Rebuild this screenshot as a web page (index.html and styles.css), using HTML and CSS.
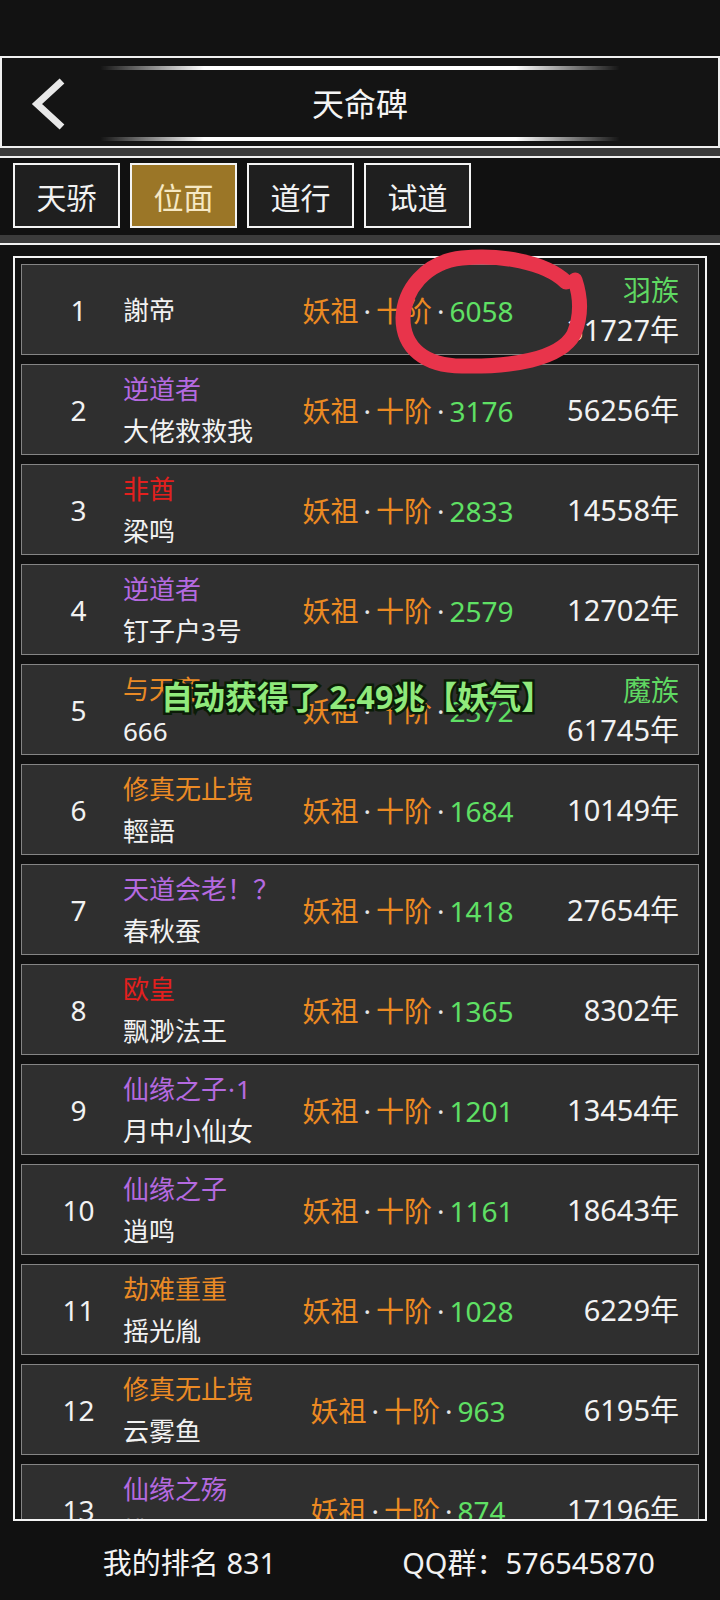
FILE: index.html
```html
<!DOCTYPE html>
<html lang="zh-CN">

<head>
    <meta charset="UTF-8">
    <meta name="viewport" content="width=device-width, initial-scale=1.0">
    <title>天命碑</title>
    <link rel="stylesheet" href="styles.css">
</head>

<body>
    <div class="screen">
        <div class="statusbar"></div>

        <header class="topbar">
            <div class="deco"></div>
            <div class="topbar-row">
                <svg class="back" width="40" height="52" viewBox="0 0 40 52">
                    <polyline points="33,3 8,26 33,49" fill="none" stroke="#e8e8e8" stroke-width="7" />
                </svg>
                <h1 class="title">天命碑</h1>
                <div></div>
            </div>
            <div class="deco"></div>
        </header>

        <div class="band"></div>

        <nav class="tabs">
            <div class="tab">天骄</div>
            <div class="tab active">位面</div>
            <div class="tab">道行</div>
            <div class="tab">试道</div>
        </nav>

        <div class="band"></div>

        <div class="board">
            <div class="list">
                <div class="row">
                    <div class="rank">1</div>
                    <div class="who"><div class="name">謝帝</div></div>
                    <div class="realm"><span class="o">妖祖</span><span class="dot">·</span><span class="o">十阶</span><span class="dot">·</span><span class="g">6058</span></div>
                    <div class="age"><div class="race">羽族</div><div>31727年</div></div>
                </div>
                <div class="row">
                    <div class="rank">2</div>
                    <div class="who"><div class="tag purple">逆道者</div><div class="name">大佬救救我</div></div>
                    <div class="realm"><span class="o">妖祖</span><span class="dot">·</span><span class="o">十阶</span><span class="dot">·</span><span class="g">3176</span></div>
                    <div class="age">56256年</div>
                </div>
                <div class="row">
                    <div class="rank">3</div>
                    <div class="who"><div class="tag red">非酋</div><div class="name">梁鸣</div></div>
                    <div class="realm"><span class="o">妖祖</span><span class="dot">·</span><span class="o">十阶</span><span class="dot">·</span><span class="g">2833</span></div>
                    <div class="age">14558年</div>
                </div>
                <div class="row">
                    <div class="rank">4</div>
                    <div class="who"><div class="tag purple">逆道者</div><div class="name">钉子户3号</div></div>
                    <div class="realm"><span class="o">妖祖</span><span class="dot">·</span><span class="o">十阶</span><span class="dot">·</span><span class="g">2579</span></div>
                    <div class="age">12702年</div>
                </div>
                <div class="row">
                    <div class="rank">5</div>
                    <div class="who"><div class="tag orange">与天齐</div><div class="name">666</div></div>
                    <div class="realm"><span class="o">妖祖</span><span class="dot">·</span><span class="o">十阶</span><span class="dot">·</span><span class="g">2372</span></div>
                    <div class="age"><div class="race">魔族</div><div>61745年</div></div>
                </div>
                <div class="row">
                    <div class="rank">6</div>
                    <div class="who"><div class="tag orange">修真无止境</div><div class="name">輕語</div></div>
                    <div class="realm"><span class="o">妖祖</span><span class="dot">·</span><span class="o">十阶</span><span class="dot">·</span><span class="g">1684</span></div>
                    <div class="age">10149年</div>
                </div>
                <div class="row">
                    <div class="rank">7</div>
                    <div class="who"><div class="tag purple">天道会老！？</div><div class="name">春秋蚕</div></div>
                    <div class="realm"><span class="o">妖祖</span><span class="dot">·</span><span class="o">十阶</span><span class="dot">·</span><span class="g">1418</span></div>
                    <div class="age">27654年</div>
                </div>
                <div class="row">
                    <div class="rank">8</div>
                    <div class="who"><div class="tag red">欧皇</div><div class="name">飘渺法王</div></div>
                    <div class="realm"><span class="o">妖祖</span><span class="dot">·</span><span class="o">十阶</span><span class="dot">·</span><span class="g">1365</span></div>
                    <div class="age">8302年</div>
                </div>
                <div class="row">
                    <div class="rank">9</div>
                    <div class="who"><div class="tag purple">仙缘之子<span class="dot small">·</span>1</div><div class="name">月中小仙女</div></div>
                    <div class="realm"><span class="o">妖祖</span><span class="dot">·</span><span class="o">十阶</span><span class="dot">·</span><span class="g">1201</span></div>
                    <div class="age">13454年</div>
                </div>
                <div class="row">
                    <div class="rank">10</div>
                    <div class="who"><div class="tag purple">仙缘之子</div><div class="name">逍鸣</div></div>
                    <div class="realm"><span class="o">妖祖</span><span class="dot">·</span><span class="o">十阶</span><span class="dot">·</span><span class="g">1161</span></div>
                    <div class="age">18643年</div>
                </div>
                <div class="row">
                    <div class="rank">11</div>
                    <div class="who"><div class="tag orange">劫难重重</div><div class="name">摇光胤</div></div>
                    <div class="realm"><span class="o">妖祖</span><span class="dot">·</span><span class="o">十阶</span><span class="dot">·</span><span class="g">1028</span></div>
                    <div class="age">6229年</div>
                </div>
                <div class="row">
                    <div class="rank">12</div>
                    <div class="who"><div class="tag orange">修真无止境</div><div class="name">云雾鱼</div></div>
                    <div class="realm"><span class="o">妖祖</span><span class="dot">·</span><span class="o">十阶</span><span class="dot">·</span><span class="g">963</span></div>
                    <div class="age">6195年</div>
                </div>
                <div class="row">
                    <div class="rank">13</div>
                    <div class="who"><div class="tag purple">仙缘之殇</div><div class="name">桃夏</div></div>
                    <div class="realm"><span class="o">妖祖</span><span class="dot">·</span><span class="o">十阶</span><span class="dot">·</span><span class="g">874</span></div>
                    <div class="age">17196年</div>
                </div>
            </div>
        </div>

        <footer class="footer">
            <div>我的排名 831</div>
            <div>QQ群：576545870</div>
        </footer>

        <div class="toast">自动获得了 2.49兆【妖气】</div>

        <svg class="mark" width="200" height="130" viewBox="390 245 200 130">
            <path d="M 566 282 C 545 262, 500 254, 462 258 C 425 262, 404 290, 403 318 C 403 348, 425 366, 462 366 C 510 367, 560 360, 574 334 C 582 315, 580 295, 575 280"
                fill="none" stroke="#e8344b" stroke-width="15" stroke-linecap="round" stroke-linejoin="round" />
        </svg>
    </div>
</body>

</html>
```

FILE: styles.css
```css
body {
    margin: 0;
    background-color: #111;
    color: #f2f2f2;
    font-family: "Noto Sans", "Noto Sans CJK SC", sans-serif;
}

.screen {
    position: relative;
    width: 720px;
    height: 1600px;
    overflow: hidden;
    display: flex;
    flex-direction: column;
    background-color: #111;
}

.statusbar {
    height: 56px;
    background-color: #121212;
}

/* header with the two glowing lines */
.topbar {
    height: 92px;
    box-sizing: border-box;
    border: 2px solid #f0f0f0;
    background-color: #141414;
    padding: 8px 0 5px;
    display: flex;
    flex-direction: column;
}

.deco {
    width: 520px;
    height: 4px;
    margin: 0 auto;
    background: linear-gradient(90deg, rgba(255, 255, 255, 0), #fff 20%, #fff 80%, rgba(255, 255, 255, 0));
    filter: blur(0.7px);
}

.topbar-row {
    flex: 1;
    display: grid;
    grid-template-columns: 1fr auto 1fr;
    align-items: center;
}

.back {
    margin-left: 27px;
    margin-top: 1px;
}

.title {
    margin: 0;
    font-size: 32px;
    font-weight: normal;
    color: #f4f4f4;
    line-height: 40px;
}

.band {
    height: 8px;
    background-color: #3b3b3b;
}

.tabs {
    border-top: 2px solid #f0f0f0;
    padding: 5px 13px 7px;
    display: flex;
    gap: 10px;
}

.tab {
    width: 107px;
    height: 65px;
    box-sizing: border-box;
    border: 2px solid #f4f4f4;
    background-color: #1f1f1f;
    font-size: 30px;
    display: flex;
    align-items: center;
    justify-content: center;
    color: #f2f2f2;
}

.tab.active {
    background-color: #9b7627;
    color: #f6e8c4;
}

.board {
    flex: 1;
    border-top: 2px solid #f0f0f0;
    padding: 11px 13px 0;
    display: flex;
    flex-direction: column;
}

.list {
    height: 1265px;
    box-sizing: border-box;
    border: 2px solid #f4f4f4;
    padding: 6px;
    overflow: hidden;
    display: flex;
    flex-direction: column;
    gap: 9px;
}

.row {
    flex: none;
    height: 91px;
    box-sizing: border-box;
    border: 1px solid #858585;
    background-color: #2f2f2f;
    display: grid;
    grid-template-columns: 101px 175px 220px 1fr;
    align-items: center;
}

.rank {
    text-align: center;
    padding-left: 12px;
    font-size: 28px;
}

.who {
    font-size: 26px;
    line-height: 42px;
    white-space: nowrap;
}

.tag.purple { color: #b56ae0; }
.tag.red { color: #e3201e; }
.tag.orange { color: #ea8a25; }

.realm {
    text-align: center;
    font-size: 28px;
    white-space: nowrap;
    color: #e0e0e0;
}

/* latin middle dot, narrower than the CJK one */
.dot {
    margin: 0 5px;
    color: #e6e6e6;
}

.dot.small {
    margin: 0 1px;
    color: inherit;
}

.o { color: #ec8a22; }
.g { color: #5fe064; }

.age {
    text-align: right;
    padding-right: 19px;
    font-size: 29px;
    line-height: 40px;
}

.race {
    font-size: 28px;
    color: #5fd862;
}

.footer {
    flex: 1;
    display: grid;
    grid-template-columns: 1fr 1fr;
    align-items: center;
    padding: 0 22px 0 20px;
    font-size: 29px;
    text-align: center;
}

/* overlays: floating reward text and the red hand drawn mark */
.toast {
    position: absolute;
    left: 161px;
    top: 677px;
    font-size: 32px;
    font-weight: bold;
    line-height: 40px;
    color: #90ea7c;
    -webkit-text-stroke: 5px #0b1c07;
    paint-order: stroke fill;
    white-space: nowrap;
}

.mark {
    position: absolute;
    left: 390px;
    top: 245px;
}
```
